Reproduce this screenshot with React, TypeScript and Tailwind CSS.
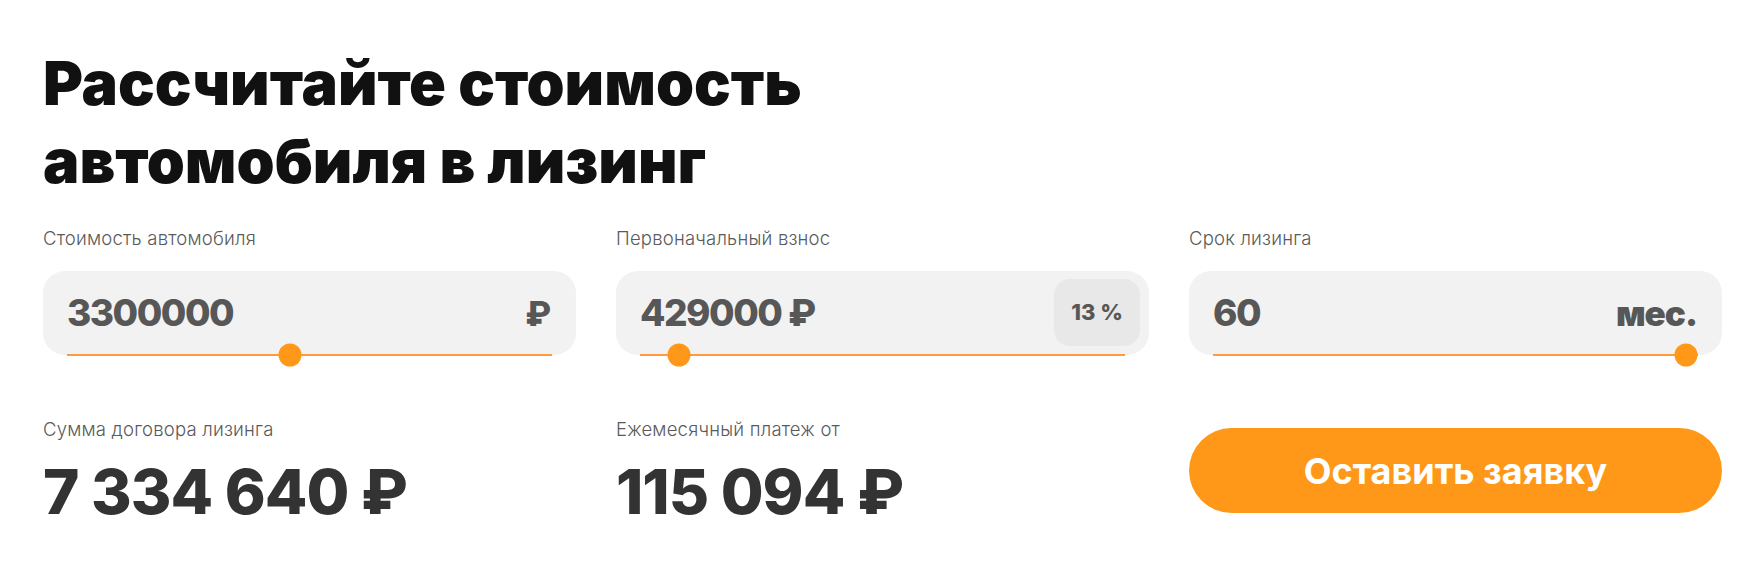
import React from "react";

type FieldProps = {
  label: string;
  value: string;
  progress: number;
  children?: React.ReactNode;
};

function Field({ label, value, progress, children }: FieldProps) {
  return (
    <div className="flex flex-col">
      <div className="text-[18.5px] leading-[22px] font-light tracking-[0.2px] text-[#5a5a5a] mb-[22px]">
        {label}
      </div>
      <div className="relative h-[84px] rounded-[22px] bg-[#f2f2f2] flex items-center justify-between pl-[24px] pr-[25px]">
        <span className="text-[37px] font-extrabold tracking-[-1.5px] text-[#575757]">
          {value}
        </span>
        {children}
        <div className="absolute left-[24px] right-[24px] bottom-[-1px] h-[2px] bg-[#ff9a3d]">
          <div
            className="absolute top-1/2 -translate-y-1/2 -translate-x-1/2 size-[23px] rounded-full bg-[#ff9819]"
            style={{ left: `${progress}%` }}
          />
        </div>
      </div>
    </div>
  );
}

function Result({ label, value }: { label: string; value: string }) {
  return (
    <div className="flex flex-col">
      <div className="text-[18.5px] leading-[22px] font-light tracking-[0.2px] text-[#5a5a5a] mb-[20px]">
        {label}
      </div>
      <div className="text-[62px] leading-[64px] font-extrabold tracking-[-1px] text-[#333]">
        {value}
      </div>
    </div>
  );
}

export default function App() {
  return (
    <div
      className="w-full h-[561px] bg-white pl-[43px] pr-[41px] pt-[44px]"
      style={{ fontFamily: "Inter, 'Noto Sans', sans-serif" }}
    >
      <h1 className="text-[61px] leading-[78px] font-black text-[#111]">
        Рассчитайте стоимость
        <br />
        автомобиля в лизинг
      </h1>
      <div className="grid grid-cols-3 gap-x-10 mt-[27px]">
        <Field label="Стоимость автомобиля" value="3300000" progress={46}>
          <span className="text-[34px] font-extrabold text-[#575757]">₽</span>
        </Field>
        <Field label="Первоначальный взнос" value="429000 ₽" progress={8}>
          <div className="absolute right-[9px] top-[8px] bottom-[9px] w-[86px] rounded-[16px] bg-[#e8e8e8] flex items-center justify-center text-[22px] font-extrabold text-[#575757]">
            13 %
          </div>
        </Field>
        <Field label="Срок лизинга" value="60" progress={97.5}>
          <span className="text-[35px] font-black tracking-[-1px] text-[#575757]">
            мес.
          </span>
        </Field>
      </div>
      <div className="grid grid-cols-3 gap-x-10 mt-[63px] items-start">
        <Result label="Сумма договора лизинга" value="7 334 640 ₽" />
        <Result label="Ежемесячный платеж от" value="115 094 ₽" />
        <button className="mt-[10px] h-[85px] rounded-full bg-[#ff9819] text-white text-[36px] font-bold">
          Оставить заявку
        </button>
      </div>
    </div>
  );
}
